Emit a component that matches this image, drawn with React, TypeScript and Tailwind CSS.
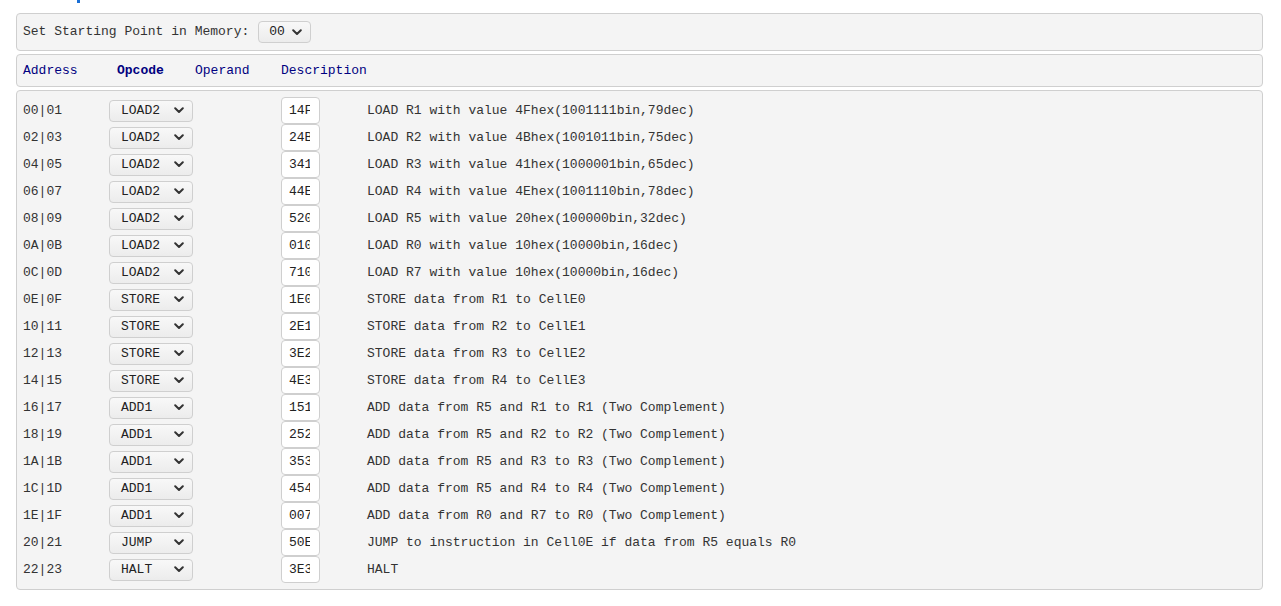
import React from "react";

const rows: [string, string, string, string][] = [
  ["00|01", "LOAD2", "14F", "LOAD R1 with value 4Fhex(1001111bin,79dec)"],
  ["02|03", "LOAD2", "24B", "LOAD R2 with value 4Bhex(1001011bin,75dec)"],
  ["04|05", "LOAD2", "341", "LOAD R3 with value 41hex(1000001bin,65dec)"],
  ["06|07", "LOAD2", "44E", "LOAD R4 with value 4Ehex(1001110bin,78dec)"],
  ["08|09", "LOAD2", "520", "LOAD R5 with value 20hex(100000bin,32dec)"],
  ["0A|0B", "LOAD2", "010", "LOAD R0 with value 10hex(10000bin,16dec)"],
  ["0C|0D", "LOAD2", "710", "LOAD R7 with value 10hex(10000bin,16dec)"],
  ["0E|0F", "STORE", "1E0", "STORE data from R1 to CellE0"],
  ["10|11", "STORE", "2E1", "STORE data from R2 to CellE1"],
  ["12|13", "STORE", "3E2", "STORE data from R3 to CellE2"],
  ["14|15", "STORE", "4E3", "STORE data from R4 to CellE3"],
  ["16|17", "ADD1", "151", "ADD data from R5 and R1 to R1 (Two Complement)"],
  ["18|19", "ADD1", "252", "ADD data from R5 and R2 to R2 (Two Complement)"],
  ["1A|1B", "ADD1", "353", "ADD data from R5 and R3 to R3 (Two Complement)"],
  ["1C|1D", "ADD1", "454", "ADD data from R5 and R4 to R4 (Two Complement)"],
  ["1E|1F", "ADD1", "007", "ADD data from R0 and R7 to R0 (Two Complement)"],
  ["20|21", "JUMP", "50E", "JUMP to instruction in Cell0E if data from R5 equals R0"],
  ["22|23", "HALT", "3E3", "HALT"],
];

const Chevron = () => (
  <svg width="10" height="7" viewBox="0 0 10 7" fill="none">
    <path d="M1.2 1.3 L5 5 L8.8 1.3" stroke="#333" strokeWidth="2" strokeLinecap="round" strokeLinejoin="round" />
  </svg>
);

const Select = ({ value, w, pl }: { value: string; w: string; pl: string }) => (
  <div
    className={`flex items-center justify-between h-[22px] ${w} ${pl} pr-[8px] border border-[#cfcfcf] rounded-[4px] bg-gradient-to-b from-[#f8f8f8] to-[#ececec] text-[#222]`}
  >
    <span>{value}</span>
    <Chevron />
  </div>
);

export default function App() {
  return (
    <div
      className="pl-4 pr-[18px] text-[13px] text-[#333] bg-white min-h-[606px]"
      style={{ fontFamily: '"Liberation Mono", "DejaVu Sans Mono", monospace' }}
    >
      <div className="h-[13px]">
        <div className="ml-[61px] w-[3px] h-[3px] bg-[#1a6fd6]" />
      </div>
      <div className="flex flex-col gap-[3px]">
        <div className="flex items-center h-[38px] px-[6px] border border-[#cfcfcf] rounded-[4px] bg-[#f4f4f4]">
          <span>Set Starting Point in Memory:</span>
          <div className="ml-[9px]">
            <Select value="00" w="w-[53px]" pl="pl-[10px]" />
          </div>
        </div>
        <div className="flex items-center h-[33px] px-[6px] border border-[#cfcfcf] rounded-[4px] bg-[#f4f4f4] text-[#000080]">
          <span className="w-[94px]">Address</span>
          <span className="w-[78px] font-bold">Opcode</span>
          <span className="w-[86px]">Operand</span>
          <span>Description</span>
        </div>
        <div className="flex flex-col py-[6px] px-[6px] border border-[#cfcfcf] rounded-[4px] bg-[#f4f4f4]">
          {rows.map(([addr, op, operand, desc]) => (
            <div key={addr} className="flex items-center h-[27px]">
              <span className="w-[86px]">{addr}</span>
              <div className="w-[172px]">
                <Select value={op} w="w-[84px]" pl="pl-[11px]" />
              </div>
              <input
                readOnly
                value={operand}
                className="w-[39px] h-[27px] pl-[7px] pr-[9px] border border-[#cfcfcf] rounded-[4px] bg-white text-[#222] text-[13px] outline-none"
                style={{ fontFamily: '"Liberation Mono", "DejaVu Sans Mono", monospace' }}
              />
              <span className="ml-[47px]">{desc}</span>
            </div>
          ))}
        </div>
      </div>
    </div>
  );
}
